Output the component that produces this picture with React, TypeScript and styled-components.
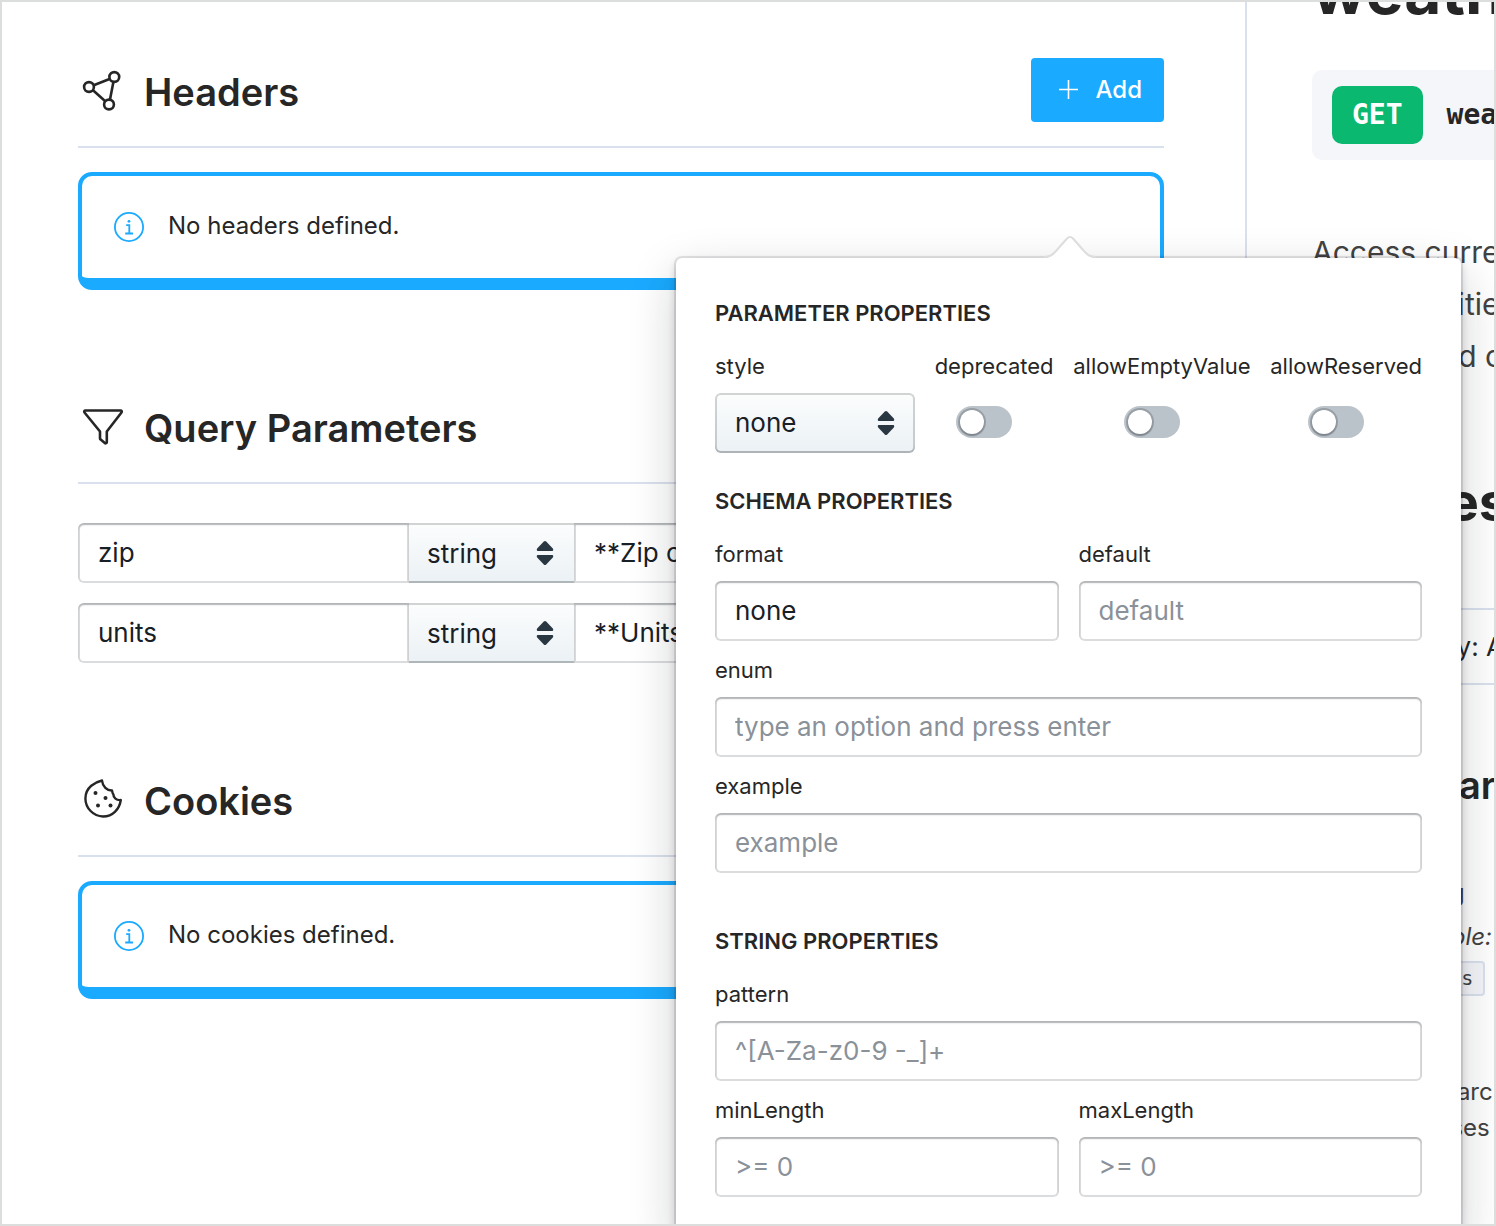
import React, { useId, useState } from "react";
import styled, { createGlobalStyle, css } from "styled-components";

const ink = "#262626";
const fieldInk = "#182026";
const muted = "#8a9199";
const azure = "#1aaaff";
const rule = "#dae1ee";
const sans = `Inter, "Liberation Sans", sans-serif`;
const mono = `"DejaVu Sans Mono", "Liberation Mono", monospace`;

const GlobalStyle = createGlobalStyle`
  *, *::before, *::after { box-sizing: border-box; }
  body { margin: 0; background: #fff; color: ${ink}; font-family: ${sans}; }
  h1, h2, h3, h4, p { margin: 0; }
  input, select, button { font-family: inherit; margin: 0; }
`;

const Frame = styled.div`
  position: relative;
  display: flex;
  height: 100vh;
  border: 2px solid #dcdddd;
  overflow: hidden;
`;

/* ---------- editor column ---------- */

const Editor = styled.main`
  flex: 1;
  min-width: 0;
  display: flex;
  flex-direction: column;
  gap: 104px;
  padding: 56px 81px 0 76px;
`;

const SectionHeader = styled.header`
  display: flex;
  align-items: center;
  justify-content: space-between;
  height: 90px;
  padding-bottom: 24px;
  border-bottom: 2px solid ${rule};
`;

const SectionTitle = styled.h2`
  display: flex;
  align-items: center;
  gap: 16px;
  padding-top: 4px;
  font-size: 38px;
  line-height: 48px;
  font-weight: 600;
`;

const AddButton = styled.button`
  display: flex;
  align-items: center;
  gap: 17px;
  height: 64px;
  padding: 0 22px 0 27px;
  border: 0;
  border-radius: 4px;
  background: ${azure};
  color: #fff;
  font-size: 24px;
  line-height: 32px;
  font-weight: 500;
`;

const Callout = styled.div`
  display: flex;
  align-items: center;
  gap: 24px;
  height: 118px;
  margin-top: 24px;
  padding: 0 32px;
  border: 4px solid ${azure};
  border-bottom-width: 12px;
  border-radius: 14px;
  font-size: 24px;
  line-height: 36px;
`;

const CalloutText = styled.p`
  padding-bottom: 2px;
`;

const ParamList = styled.div`
  display: flex;
  flex-direction: column;
  gap: 20px;
  margin-top: 39px;
`;

const ParamRow = styled.div`
  display: grid;
  grid-template-columns: 331px 165px 1fr;
`;

/* ---------- fields ---------- */

const TextInput = styled.input<{ $corners?: string }>`
  width: 100%;
  min-width: 0;
  height: 60px;
  padding: 0 20px 2px;
  border: 0;
  border-radius: ${(p) => p.$corners ?? "6px"};
  outline: none;
  background: #fff;
  box-shadow: inset 0 0 0 2px rgba(16, 22, 26, 0.15), inset 0 2px 2px rgba(16, 22, 26, 0.2);
  color: ${fieldInk};
  font-size: 26px;
  &::placeholder {
    color: ${muted};
    opacity: 1;
  }
`;

const SelectBox = styled.div`
  position: relative;
  height: 60px;
`;

const NativeSelect = styled.select<{ $joined?: boolean }>`
  appearance: none;
  width: 100%;
  height: 100%;
  border: 0;
  outline: none;
  background: linear-gradient(to bottom, #fcfdfd, #ebf1f5);
  color: ${fieldInk};
  font-size: 26px;
  ${(p) =>
    p.$joined
      ? css`
          padding: 0 56px 0 18px;
          border-radius: 0;
          box-shadow: inset 0 2px 0 rgba(16, 22, 26, 0.18), inset 0 -2px 0 rgba(16, 22, 26, 0.27);
        `
      : css`
          padding: 0 56px 2px 20px;
          border-radius: 6px;
          box-shadow: inset 0 0 0 2px rgba(16, 22, 26, 0.18), inset 0 -2px 0 rgba(16, 22, 26, 0.12);
        `}
`;

const SelectCaret = styled.svg`
  position: absolute;
  top: 18px;
  right: 20px;
  pointer-events: none;
`;

/* ---------- popover ---------- */

const Popover = styled.section`
  position: absolute;
  top: 256px;
  right: 33px;
  width: 785px;
  padding: 40px 39px;
  border-radius: 6px;
  background: #fff;
  box-shadow: 0 0 0 2px rgba(16, 22, 26, 0.1), 0 4px 8px rgba(16, 22, 26, 0.2),
    0 16px 48px rgba(16, 22, 26, 0.2);
`;

const PopoverTip = styled.svg`
  position: absolute;
  top: -24px;
  right: 361px;
`;

const Group = styled.div<{ $gap?: number }>`
  margin-top: ${(p) => p.$gap ?? 0}px;
`;

const GroupTitle = styled.h3`
  margin-bottom: 23px;
  font-size: 22px;
  line-height: 30px;
  font-weight: 600;
  text-transform: uppercase;
`;

const Fields = styled.div`
  display: grid;
  grid-template-columns: 1fr 1fr;
  gap: 14px 20px;
`;

const FieldCell = styled.div<{ $wide?: boolean }>`
  grid-column: ${(p) => (p.$wide ? "1 / -1" : "auto")};
`;

const FieldLabel = styled.label`
  display: block;
  margin-bottom: 12px;
  font-size: 22px;
  line-height: 30px;
`;

const OptionRow = styled.div`
  display: flex;
  justify-content: space-between;
`;

const StyleCell = styled.div`
  width: 200px;
`;

const SwitchCell = styled.div`
  display: flex;
  flex-direction: column;
  align-items: center;
`;

const Switch = styled.input`
  appearance: none;
  width: 56px;
  height: 32px;
  margin: 13px 20px 0 0;
  padding: 4px;
  border-radius: 16px;
  background: #bbc3ca;
  &::before {
    content: "";
    display: block;
    width: 24px;
    height: 24px;
    border-radius: 50%;
    background: #fff;
    box-shadow: 0 0 0 2px rgba(16, 22, 26, 0.2), 0 2px 2px rgba(16, 22, 26, 0.2);
  }
  &:checked {
    background: ${azure};
  }
  &:checked::before {
    margin-left: 24px;
  }
`;

/* ---------- preview column ---------- */

const Preview = styled.aside`
  flex: 0 0 249px;
  overflow: hidden;
  padding-left: 65px;
  border-left: 2px solid ${rule};
  white-space: nowrap;
`;

const PreviewTitle = styled.h1`
  margin-top: -49px;
  font-size: 64px;
  line-height: 76px;
  font-weight: 700;
`;

const UrlBar = styled.div`
  display: flex;
  align-items: center;
  gap: 24px;
  width: 800px;
  height: 90px;
  margin-top: 41px;
  padding: 0 20px;
  border-radius: 10px;
  background: #f5f6fa;
  font-family: ${mono};
  font-size: 28px;
  line-height: 36px;
  font-weight: 700;
`;

const Method = styled.span`
  padding: 11px 20px;
  border-radius: 10px;
  background: #0ab870;
  color: #fff;
`;

const Summary = styled.p`
  margin-top: 66px;
  color: #424242;
  font-size: 30px;
  line-height: 52px;
`;

const RequestTitle = styled.h2`
  margin-top: 86px;
  font-size: 54px;
  line-height: 68px;
  font-weight: 700;
`;

const Security = styled.div`
  display: flex;
  align-items: center;
  height: 77px;
  margin-top: 72px;
  padding-left: 57px;
  border: solid ${rule};
  border-width: 2px 0;
  font-size: 26px;
`;

const QueryTitle = styled.h3`
  margin-top: 76px;
  font-size: 38px;
  line-height: 48px;
  font-weight: 600;
`;

const ParamDoc = styled.div`
  margin-top: 66px;
  color: #424242;
  font-size: 24px;
  line-height: 36px;
`;

const DocLine = styled.p<{ $indent?: number }>`
  padding-left: ${(p) => p.$indent ?? 0}px;
`;

const ExampleLine = styled(DocLine)`
  margin-top: 8px;
`;

const CodeChip = styled.code`
  display: block;
  width: fit-content;
  height: 35px;
  margin: 6px 0 78px 89px;
  padding: 0 10px;
  border: 2px solid ${rule};
  border-radius: 4px;
  background: #f5f6fa;
  font-family: ${mono};
  font-size: 20px;
  line-height: 31px;
`;

/* ---------- drawings ---------- */

const NodesIcon = () => (
  <svg width="50" height="48" viewBox="0 2 50 48" fill="none" stroke={ink} strokeWidth="2.6" aria-hidden="true">
    <circle cx="11" cy="21" r="4.900" />
    <circle cx="36.300" cy="11" r="4.900" />
    <circle cx="31" cy="38.500" r="4.900" />
    <path d="M15.700 19.200 31.500 13M15 24.300 27 35M35.400 16 32 33.500" />
  </svg>
);

const FunnelIcon = () => (
  <svg width="50" height="48" viewBox="0 2 50 48" fill="none" stroke={ink} strokeWidth="2.600" strokeLinejoin="round" aria-hidden="true">
    <path d="M7.500 8.500H42.500a1.200 1.200 0 0 1 1 2L28.800 29.500V40a1.200 1.200 0 0 1-2 1L22.700 37.600a1.500 1.500 0 0 1-.700-1.300V29.500L6.500 10.500A1.200 1.200 0 0 1 7.500 8.500Z" />
  </svg>
);

const CookieIcon = () => (
  <svg width="50" height="48" viewBox="0 2 50 48" fill="none" stroke={ink} strokeWidth="2.400" strokeLinejoin="round" aria-hidden="true">
    <path d="M24 5.500C17.500 7 7.400 12 7.400 23.500A18.200 18.200 0 0 0 25 41.500C35 41.500 41.500 34 42.800 25C38.500 25.600 35.200 22.500 35.400 19.300C34.600 18.600 34.400 17.500 34 15.500C29 15.700 24.600 11.500 24 5.500Z" />
    <g fill={ink} stroke="none">
      <circle cx="17.500" cy="18" r="2" />
      <circle cx="27.500" cy="23" r="2" />
      <circle cx="20" cy="30.500" r="2" />
      <circle cx="32.500" cy="30.500" r="2" />
    </g>
  </svg>
);

const InfoIcon = () => (
  <svg width="30" height="30" viewBox="0 0 30 30" fill="none" stroke={azure} strokeWidth="1.800" aria-hidden="true">
    <circle cx="15" cy="15" r="14.100" />
    <path d="M12.200 13.200H15.300V21.300M11.200 21.500H19" />
    <circle cx="15" cy="9.300" r="1.400" fill={azure} stroke="none" />
  </svg>
);

const PlusIcon = () => (
  <svg width="21" height="20" viewBox="0 0 21 20" stroke="#fff" strokeWidth="1.600" aria-hidden="true">
    <path d="M1 9.500H20M10.500 0V19" />
  </svg>
);

const Caret = () => (
  <SelectCaret width="18" height="24" viewBox="0 0 18 24" fill="#293742" aria-hidden="true">
    <path d="M7.800 .600a1.700 1.700 0 0 1 2.400 0L16.600 7.300C17.800 8.600 17.200 10 15.800 10H2.200C.800 10 .200 8.600 1.400 7.300Z" />
    <path d="M7.800 23.400a1.700 1.700 0 0 0 2.400 0L16.600 16.700C17.800 15.400 17.200 14 15.800 14H2.200C.800 14 .200 15.400 1.400 16.700Z" />
  </SelectCaret>
);

const Tip = () => (
  <PopoverTip width="60" height="26" viewBox="0 0 60 26" aria-hidden="true">
    <path d="M4 24C11 24 13 21 16 18L27 5Q30 1.500 33 5L44 18C47 21 49 24 56 24V26H4Z" fill="#fff" />
    <path d="M4 23C11 23 13 20 16 17L27 4.500Q30 1.500 33 4.500L44 17C47 20 49 23 56 23" fill="none" stroke="#dcdddd" strokeWidth="2" />
  </PopoverTip>
);

/* ---------- composed parts ---------- */

const Dropdown = ({ id, label, options, joined }: { id?: string; label?: string; options: string[]; joined?: boolean }) => (
  <SelectBox>
    <NativeSelect id={id} aria-label={label} $joined={joined} defaultValue={options[0]}>
      {options.map((o) => (
        <option key={o}>{o}</option>
      ))}
    </NativeSelect>
    <Caret />
  </SelectBox>
);

type FieldProps = { label: string; value?: string; placeholder?: string; wide?: boolean };

const Field = ({ label, value, placeholder, wide }: FieldProps) => {
  const id = useId();
  return (
    <FieldCell $wide={wide}>
      <FieldLabel htmlFor={id}>{label}</FieldLabel>
      <TextInput id={id} defaultValue={value} placeholder={placeholder} />
    </FieldCell>
  );
};

const Toggle = ({ label }: { label: string }) => {
  const id = useId();
  const [on, setOn] = useState(false);
  return (
    <SwitchCell>
      <FieldLabel htmlFor={id}>{label}</FieldLabel>
      <Switch id={id} type="checkbox" role="switch" checked={on} onChange={() => setOn(!on)} />
    </SwitchCell>
  );
};

const queryParams = [
  { name: "zip", description: "**Zip code" },
  { name: "units", description: "**Units" },
];

export default function App() {
  const styleId = useId();
  return (
    <>
      <GlobalStyle />
      <Frame>
        <Editor>
          <section>
            <SectionHeader>
              <SectionTitle>
                <NodesIcon />
                Headers
              </SectionTitle>
              <AddButton type="button">
                <PlusIcon />
                Add
              </AddButton>
            </SectionHeader>
            <Callout>
              <InfoIcon />
              <CalloutText>No headers defined.</CalloutText>
            </Callout>
          </section>

          <section>
            <SectionHeader>
              <SectionTitle>
                <FunnelIcon />
                Query Parameters
              </SectionTitle>
            </SectionHeader>
            <ParamList>
              {queryParams.map((p) => (
                <ParamRow key={p.name}>
                  <TextInput aria-label="Name" defaultValue={p.name} $corners="6px 0 0 6px" />
                  <Dropdown label="Type" options={["string", "number", "boolean"]} joined />
                  <TextInput aria-label="Description" defaultValue={p.description} $corners="0 6px 6px 0" />
                </ParamRow>
              ))}
            </ParamList>
          </section>

          <section>
            <SectionHeader>
              <SectionTitle>
                <CookieIcon />
                Cookies
              </SectionTitle>
            </SectionHeader>
            <Callout>
              <InfoIcon />
              <CalloutText>No cookies defined.</CalloutText>
            </Callout>
          </section>
        </Editor>

        <Preview>
          <PreviewTitle>weather</PreviewTitle>
          <UrlBar>
            <Method>GET</Method>
            weather
          </UrlBar>
          <Summary>
            Access current
            <br />
            200,000 cities
            <br />
            models and current
          </Summary>
          <RequestTitle>Request</RequestTitle>
          <Security>Security: API Key</Security>
          <QueryTitle>Query Parameters</QueryTitle>
          <ParamDoc>
            <DocLine $indent={88}>string</DocLine>
            <ExampleLine $indent={76}>
              <em>Example:</em>
            </ExampleLine>
            <CodeChip>units</CodeChip>
            <DocLine $indent={118}>search</DocLine>
            <DocLine $indent={92}>Houses</DocLine>
          </ParamDoc>
        </Preview>

        <Popover aria-label="Parameter properties">
          <Tip />
          <Group>
            <GroupTitle>Parameter Properties</GroupTitle>
            <OptionRow>
              <StyleCell>
                <FieldLabel htmlFor={styleId}>style</FieldLabel>
                <Dropdown id={styleId} options={["none", "simple"]} />
              </StyleCell>
              <Toggle label="deprecated" />
              <Toggle label="allowEmptyValue" />
              <Toggle label="allowReserved" />
            </OptionRow>
          </Group>
          <Group $gap={33}>
            <GroupTitle>Schema Properties</GroupTitle>
            <Fields>
              <Field label="format" value="none" />
              <Field label="default" placeholder="default" />
              <Field label="enum" placeholder="type an option and press enter" wide />
              <Field label="example" placeholder="example" wide />
            </Fields>
          </Group>
          <Group $gap={53}>
            <GroupTitle>String Properties</GroupTitle>
            <Fields>
              <Field label="pattern" placeholder="^[A-Za-z0-9 -_]+" wide />
              <Field label="minLength" placeholder=">= 0" />
              <Field label="maxLength" placeholder=">= 0" />
            </Fields>
          </Group>
        </Popover>
      </Frame>
    </>
  );
}
